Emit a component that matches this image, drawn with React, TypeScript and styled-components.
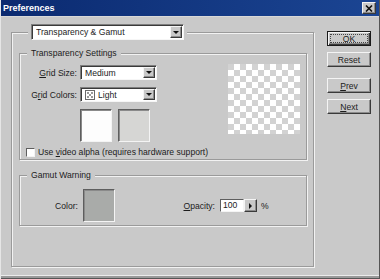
import React from 'react';
import styled, { createGlobalStyle } from 'styled-components';

const GlobalStyle = createGlobalStyle`
  html, body {
    margin: 0;
    padding: 0;
    background: #c9c9c9;
  }
  body {
    font-family: "Liberation Sans", Arial, sans-serif;
    font-size: 8.6px;
    color: #1c1c1c;
  }
`;

const App = () => {
  return (
    <>
      <GlobalStyle />
      <StyledWindow>
        <StyledTitleBar>
          <span>Preferences</span>
          <StyledCloseButton>
            <svg width="8" height="7" viewBox="0 0 8 7">
              <path d="M1 0.5 L7 6.5 M7 0.5 L1 6.5" stroke="#111" strokeWidth="1.6" />
            </svg>
          </StyledCloseButton>
        </StyledTitleBar>
        <StyledBody>
          <StyledOuterGroup>
            <StyledComboLegend>
              <Select width={153} height={16} text="Transparency & Gamut" />
            </StyledComboLegend>
            <StyledGroup $height={113}>
              <StyledLegend>Transparency Settings</StyledLegend>
              <StyledTopRow>
                <StyledFormGrid>
                  <StyledLabel><u>G</u>rid Size:</StyledLabel>
                  <Select width={77} height={15} text="Medium" />
                  <StyledLabel>G<u>r</u>id Colors:</StyledLabel>
                  <Select width={77} height={15} text="Light" icon />
                  <span />
                  <StyledSwatchPair>
                    <StyledSwatch $color="#fdfdfd" />
                    <StyledSwatch $color="#d6d6d4" />
                  </StyledSwatchPair>
                </StyledFormGrid>
                <StyledPreview />
              </StyledTopRow>
              <StyledCheckRow>
                <StyledCheckbox />
                <span>Use <u>v</u>ideo alpha (requires hardware support)</span>
              </StyledCheckRow>
            </StyledGroup>
            <StyledGroup $height={57} $gap={9}>
              <StyledLegend>Gamut Warning</StyledLegend>
              <StyledGamutRow>
                <StyledLabel $width={58}>Color:</StyledLabel>
                <StyledSwatch $color="#a9aba9" />
                <StyledLabel $width={100}><u>O</u>pacity:</StyledLabel>
                <StyledSpinInput>100</StyledSpinInput>
                <StyledSpinButton />
                <StyledPercent>%</StyledPercent>
              </StyledGamutRow>
            </StyledGroup>
          </StyledOuterGroup>
          <StyledButtonColumn>
            <StyledButton $default>OK</StyledButton>
            <StyledButton $gap={6}>Reset</StyledButton>
            <StyledButton $gap={11}><u>P</u>rev</StyledButton>
            <StyledButton $gap={6}><u>N</u>ext</StyledButton>
          </StyledButtonColumn>
        </StyledBody>
      </StyledWindow>
    </>
  );
};

export default App;

interface ISelectProps {
  width: number;
  height: number;
  text: string;
  icon?: boolean;
}

const Select = ({ width, height, text, icon }: ISelectProps) => {
  return (
    <StyledSelect $width={width} $height={height}>
      {icon && (
        <StyledGridIcon width="10" height="10" viewBox="0 0 10 10">
          <rect x="0.5" y="0.5" width="9" height="9" fill="#fff" stroke="#6a6a6a" />
          <rect x="2" y="2" width="2" height="2" fill="#9a9a9a" />
          <rect x="6" y="2" width="2" height="2" fill="#9a9a9a" />
          <rect x="4" y="4" width="2" height="2" fill="#9a9a9a" />
          <rect x="2" y="6" width="2" height="2" fill="#9a9a9a" />
          <rect x="6" y="6" width="2" height="2" fill="#9a9a9a" />
        </StyledGridIcon>
      )}
      <StyledSelectText>{text}</StyledSelectText>
      <StyledDropButton />
    </StyledSelect>
  );
};

const StyledWindow = styled.div`
  width: 380px;
  height: 279px;
  box-sizing: border-box;
  padding: 0 1px 1px 1px;
  display: flex;
  flex-direction: column;
  overflow: hidden;
  background: #c9c9c9;
  box-shadow: inset 1px 0 0 #e6e6e6, inset -1px -1px 0 #555, inset 0 -3px 0 #9a9a9a, inset 0 -4px 0 #ececec;
`;

const StyledTitleBar = styled.div`
  height: 16px;
  flex-shrink: 0;
  display: flex;
  align-items: center;
  justify-content: space-between;
  padding: 0 3px 0 2px;
  background: linear-gradient(90deg, #0b2a70, #1b4593);
  color: #fff;
  font-weight: bold;
  font-size: 9px;
  border-bottom: 1px solid #d8d8d8;
`;

const _StyledRaised = styled.div`
  box-sizing: border-box;
  background: #c9c9c9;
  border: 1px solid;
  border-color: #f4f4f4 #3a3a3a #3a3a3a #f4f4f4;
  box-shadow: inset -1px -1px 0 #8c8c8c;
`;

const StyledCloseButton = styled(_StyledRaised)`
  width: 14px;
  height: 12px;
  display: flex;
  align-items: center;
  justify-content: center;
`;

const StyledBody = styled.div`
  display: flex;
  align-items: flex-start;
  padding: 7px 0 0 10px;
`;

const StyledOuterGroup = styled.fieldset`
  margin: 0;
  padding: 7px 6px 0 7px;
  min-width: 0;
  width: 303px;
  height: 243px;
  box-sizing: border-box;
  border: 1px solid #9a9a9a;
  box-shadow: inset 1px 1px 0 #f2f2f2, 1px 1px 0 #f2f2f2;
`;

const StyledComboLegend = styled.legend`
  margin-left: 9px;
  padding: 0 3px;
  background: #c9c9c9;
`;

const StyledGroup = styled.fieldset<{ $height: number; $gap?: number }>`
  margin: ${({ $gap }) => $gap || 0}px 0 0 0;
  padding: 0;
  min-width: 0;
  width: 288px;
  height: ${({ $height }) => $height}px;
  box-sizing: border-box;
  border: 1px solid #9a9a9a;
  box-shadow: inset 1px 1px 0 #f2f2f2, 1px 1px 0 #f2f2f2;
`;

const StyledLegend = styled.legend`
  margin-left: 7px;
  padding: 0 4px;
  line-height: 12px;
  background: #c9c9c9;
`;

const StyledTopRow = styled.div`
  display: flex;
  align-items: flex-start;
  padding: 6px 6px 0 0;
`;

const StyledFormGrid = styled.div`
  display: grid;
  grid-template-columns: 57px 77px;
  column-gap: 3px;
  row-gap: 7px;
  align-items: center;
`;

const StyledLabel = styled.span<{ $width?: number }>`
  text-align: right;
  white-space: nowrap;
  ${({ $width }) => $width && `width: ${$width}px; margin-right: 5px; flex-shrink: 0;`}
`;

const StyledSelect = styled.div<{ $width: number; $height: number }>`
  width: ${({ $width }) => $width}px;
  height: ${({ $height }) => $height}px;
  box-sizing: border-box;
  display: flex;
  align-items: center;
  padding: 1px 1px 1px 4px;
  background: #fff;
  border: 1px solid;
  border-color: #7e7e7e #f6f6f6 #f6f6f6 #7e7e7e;
  box-shadow: inset 1px 1px 0 #3a3a3a;
  font-size: 8.6px;
`;

const StyledGridIcon = styled.svg`
  margin-right: 3px;
  flex-shrink: 0;
`;

const StyledSelectText = styled.span`
  flex: 1;
  white-space: nowrap;
  overflow: hidden;
`;

const StyledDropButton = styled(_StyledRaised)`
  width: 12px;
  align-self: stretch;
  display: flex;
  align-items: center;
  justify-content: center;
  &::after {
    content: '';
    border-left: 3px solid transparent;
    border-right: 3px solid transparent;
    border-top: 3px solid #111;
  }
`;

const StyledSwatchPair = styled.div`
  display: flex;
  gap: 6px;
`;

const StyledSwatch = styled.div<{ $color: string }>`
  width: 32px;
  height: 33px;
  box-sizing: border-box;
  flex-shrink: 0;
  background: ${({ $color }) => $color};
  border: 1px solid;
  border-color: #5e5e5e #f4f4f4 #f4f4f4 #5e5e5e;
  box-shadow: inset 1px 1px 0 #8a8a8a;
`;

const StyledPreview = styled.div`
  margin-left: auto;
  margin-top: -1px;
  width: 72px;
  height: 70px;
  background: repeating-conic-gradient(#fff 0 25%, #d2d2d2 0 50%) 0 0 / 12px 12px;
`;

const StyledCheckRow = styled.div`
  display: flex;
  align-items: center;
  gap: 3px;
  margin-top: 5px;
  padding-left: 6px;
  white-space: nowrap;
`;

const StyledCheckbox = styled.div`
  width: 9px;
  height: 9px;
  box-sizing: border-box;
  background: #fff;
  border: 1px solid;
  border-color: #5e5e5e #f4f4f4 #f4f4f4 #5e5e5e;
`;

const StyledGamutRow = styled.div`
  display: flex;
  align-items: center;
  padding-top: 8px;
`;

const StyledSpinInput = styled.div`
  width: 24px;
  height: 13px;
  box-sizing: border-box;
  padding-left: 2px;
  line-height: 11px;
  background: #fff;
  border: 1px solid;
  border-color: #5e5e5e #f4f4f4 #f4f4f4 #5e5e5e;
`;

const StyledSpinButton = styled(_StyledRaised)`
  width: 13px;
  height: 13px;
  display: flex;
  align-items: center;
  justify-content: center;
  &::after {
    content: '';
    border-top: 3px solid transparent;
    border-bottom: 3px solid transparent;
    border-left: 3px solid #111;
  }
`;

const StyledPercent = styled.span`
  margin-left: 4px;
`;

const StyledButtonColumn = styled.div`
  display: flex;
  flex-direction: column;
  margin: 7px 0 0 13px;
`;

const StyledButton = styled.div<{ $default?: boolean; $gap?: number }>`
  width: 44px;
  height: 15px;
  box-sizing: border-box;
  margin-top: ${({ $gap }) => $gap || 0}px;
  display: flex;
  align-items: center;
  justify-content: center;
  background: #c9c9c9;
  border: 1px solid;
  border-color: ${({ $default }) => ($default ? '#1a1a1a' : '#f4f4f4 #3a3a3a #3a3a3a #f4f4f4')};
  box-shadow: ${({ $default }) =>
    $default
      ? 'inset 1px 1px 0 #f4f4f4, inset -1px -1px 0 #3a3a3a, inset -2px -2px 0 #8c8c8c'
      : 'inset -1px -1px 0 #8c8c8c'};
  ${({ $default }) => $default && 'outline: 1px dotted #444; outline-offset: -4px;'}
`;
